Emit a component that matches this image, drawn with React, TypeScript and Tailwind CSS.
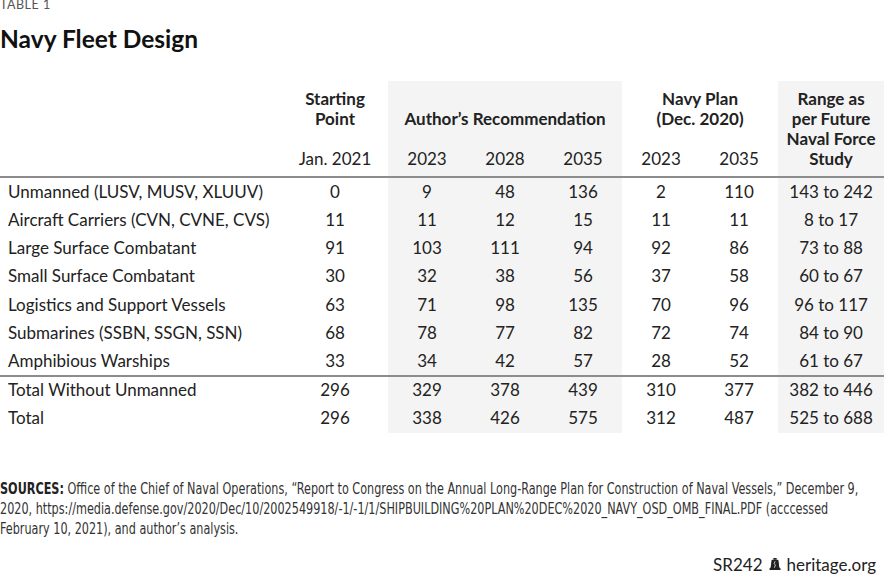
import React from 'react';

const ROWS: [string, ...string[]][] = [
  ['Unmanned (LUSV, MUSV, XLUUV)', '0', '9', '48', '136', '2', '110', '143 to 242'],
  ['Aircraft Carriers (CVN, CVNE, CVS)', '11', '11', '12', '15', '11', '11', '8 to 17'],
  ['Large Surface Combatant', '91', '103', '111', '94', '92', '86', '73 to 88'],
  ['Small Surface Combatant', '30', '32', '38', '56', '37', '58', '60 to 67'],
  ['Logistics and Support Vessels', '63', '71', '98', '135', '70', '96', '96 to 117'],
  ['Submarines (SSBN, SSGN, SSN)', '68', '78', '77', '82', '72', '74', '84 to 90'],
  ['Amphibious Warships', '33', '34', '42', '57', '28', '52', '61 to 67'],
];

const TOTALS: [string, ...string[]][] = [
  ['Total Without Unmanned', '296', '329', '378', '439', '310', '377', '382 to 446'],
  ['Total', '296', '338', '426', '575', '312', '487', '525 to 688'],
];

// shaded columns: author's recommendation (2,3,4) and range (7)
const SHADED = [false, false, true, true, true, false, false, true];

function BellIcon() {
  return (
    <svg width="12" height="13" viewBox="0 0 11 12" className="inline-block">
      <rect x="4" y="0" width="3" height="1.6" fill="#222" />
      <path d="M3 1.6 H8 C8.6 1.6 8.8 2.4 8.9 3.4 L9.4 8.4 C9.5 9 10 9.4 10.6 9.6 V11 H0.4 V9.6 C1 9.4 1.5 9 1.6 8.4 L2.1 3.4 C2.2 2.4 2.4 1.6 3 1.6 Z" fill="#222" />
      <path d="M5.6 3 L4.8 5.2 L5.8 6.6 L5 9" stroke="#fff" strokeWidth="0.7" fill="none" />
    </svg>
  );
}

function BodyRow({ cells, first }: { cells: string[]; first?: boolean }) {
  return (
    <tr className={first ? 'border-t-2 border-[#8c8c8c]' : ''}>
      {cells.map((c, i) => (
        <td
          key={i}
          className={`h-[28.4px] p-0 leading-[20px] ${i === 0 ? 'pl-2 text-left' : 'text-center'} ${SHADED[i] ? 'bg-[#f4f4f4]' : ''}`}
        >
          {c}
        </td>
      ))}
    </tr>
  );
}

export default function App() {
  return (
    <div className="w-[884px] h-[585px] bg-white overflow-hidden text-[#222]" style={{ fontFamily: 'Lato, "Open Sans", sans-serif' }}>
      <div className="text-[12.5px] leading-[12px] tracking-[0.5px] text-[#555] -mt-[1px]">TABLE 1</div>
      <h1 className="mt-[15px] text-[24.5px] leading-[26px] font-bold text-[#111]">Navy Fleet Design</h1>

      <table className="mt-[29px] table-fixed border-collapse w-[884px] text-[17px]">
        <colgroup>
          <col className="w-[282px]" />
          <col className="w-[106px]" />
          <col className="w-[78px]" />
          <col className="w-[78px]" />
          <col className="w-[78px]" />
          <col className="w-[78px]" />
          <col className="w-[78px]" />
          <col className="w-[106px]" />
        </colgroup>
        <thead>
          <tr>
            <th className="p-0" />
            <th className="p-0 pt-2 align-bottom text-center font-bold leading-[20px]">Starting<br />Point</th>
            <th colSpan={3} className="p-0 pt-2 align-bottom text-center font-bold leading-[20px] bg-[#f4f4f4]">Author’s Recommendation</th>
            <th colSpan={2} className="p-0 pt-2 align-bottom text-center font-bold leading-[20px]">Navy Plan<br />(Dec. 2020)</th>
            <th rowSpan={2} className="p-0 pt-2 pb-[7px] align-bottom text-center font-bold leading-[20px] bg-[#f4f4f4]">Range as<br />per Future<br />Naval Force<br />Study</th>
          </tr>
          <tr>
            <th className="p-0" />
            {['Jan. 2021', '2023', '2028', '2035', '2023', '2035'].map((y, i) => (
              <th key={i} className={`p-0 pt-5 pb-[7px] text-center font-normal leading-[20px] ${SHADED[i + 1] ? 'bg-[#f4f4f4]' : ''}`}>{y}</th>
            ))}
          </tr>
        </thead>
        <tbody>
          {ROWS.map((r, i) => (
            <BodyRow key={r[0]} cells={r} first={i === 0} />
          ))}
          {TOTALS.map((r, i) => (
            <BodyRow key={r[0]} cells={r} first={i === 0} />
          ))}
        </tbody>
      </table>

      {/* condensed source note */}
      <div
        className="mt-[46px] w-[1040px] origin-top-left scale-x-[0.832] text-[15px] leading-[20px] text-[#333] whitespace-nowrap"
        style={{ fontFamily: '"Liberation Sans Narrow", "DejaVu Sans Condensed", sans-serif' }}
      >
        <span className="font-bold text-[#222]">SOURCES:</span> Office of the Chief of Naval Operations, “Report to Congress on the Annual Long-Range Plan for Construction of Naval Vessels,” December 9,
        <br />
        2020, https://media.defense.gov/2020/Dec/10/2002549918/-1/-1/1/SHIPBUILDING%20PLAN%20DEC%2020_NAVY_OSD_OMB_FINAL.PDF (acccessed
        <br />
        February 10, 2021), and author’s analysis.
      </div>

      <div className="mt-[16px] pr-[8px] flex justify-end items-center gap-[6px] text-[17px] leading-[20px] text-[#222]">
        <span>SR242</span>
        <BellIcon />
        <span>heritage.org</span>
      </div>
    </div>
  );
}
